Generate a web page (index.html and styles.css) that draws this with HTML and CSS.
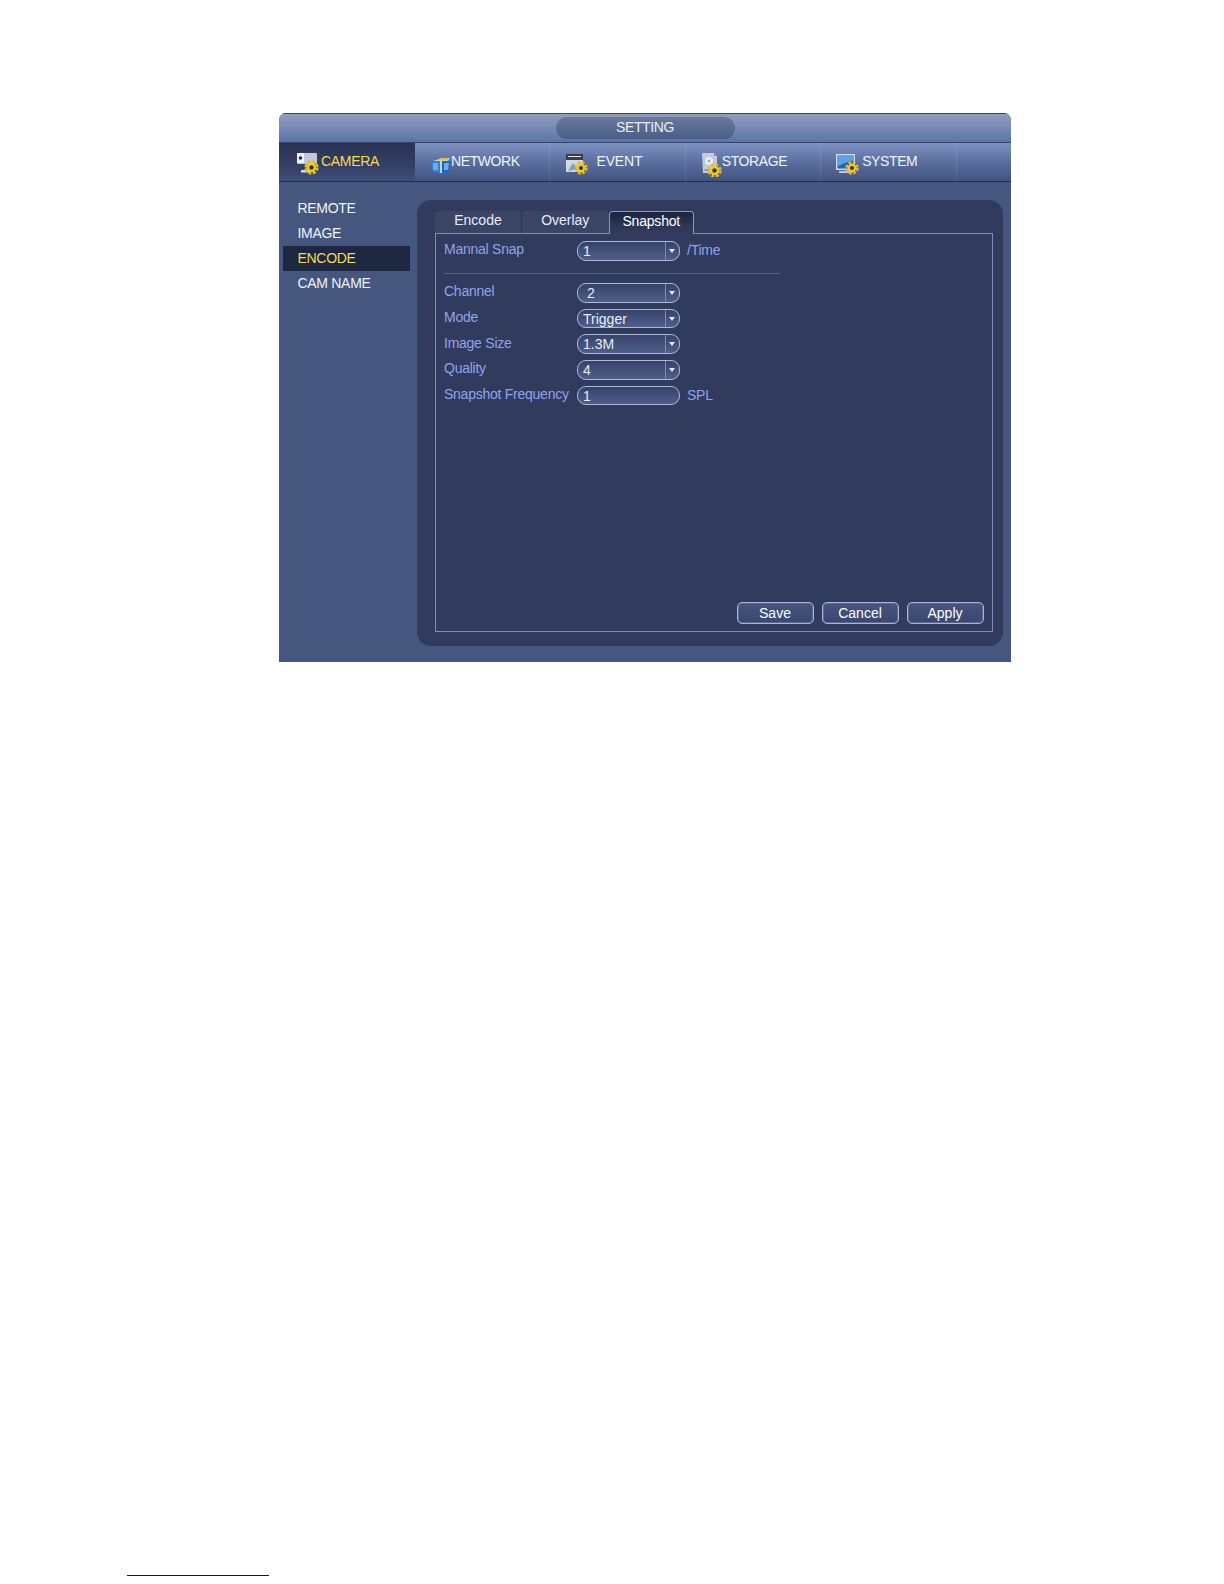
FILE: index.html
```html
<!DOCTYPE html>
<html lang="en">
  <head>
    <meta charset="UTF-8" />
    <title>Setting - Camera - Snapshot</title>
    <link rel="stylesheet" href="styles.css">
  </head>
  <body>
    <svg class="defs" width="0" height="0">
      <symbol id="gear" viewBox="0 0 14 14">
        <circle cx="7" cy="7" r="5.2" fill="none" stroke="#e6bc1c" stroke-width="3" stroke-dasharray="2.6 1.5"/>
        <circle cx="7" cy="7" r="4.2" fill="#f0cc30"/>
        <circle cx="7" cy="7" r="2.1" fill="#3a3a2c"/>
      </symbol>
    </svg>

    <div class="window">
      <div class="titlebar">
        <div class="title-pill">SETTING</div>
      </div>

      <div class="nav">
        <div class="nav-item active cam">
          <svg class="icon" width="24" height="24" viewBox="0 0 24 24">
            <rect x="0" y="0" width="20" height="11" rx="1" fill="#c4c8d4"/>
            <rect x="0" y="0" width="7" height="10" rx="1" fill="#f2f3f6"/>
            <circle cx="3.500" cy="5" r="1.800" fill="#20263c"/>
            <rect x="8" y="11" width="4" height="6" fill="#8c92a6"/>
            <rect x="4" y="17" width="9" height="2.500" fill="#d8dae2"/>
            <use href="#gear" x="7" y="7" width="15" height="15"/>
          </svg>
          <span>CAMERA</span>
        </div>
        <div class="nav-item net">
          <svg class="icon" width="20" height="20" viewBox="0 0 20 20">
            <path d="M2 6l9-3h8l-2 3z" fill="#d8cf9c"/>
            <path d="M11 3h6v2h-6z" fill="#e8bc2c"/>
            <path d="M0 6h9v12l-7-1z" fill="#2f7fd8"/>
            <path d="M9 6h2v12H9z" fill="#c4d8f0"/>
            <path d="M11 6h9l-2 11-7 1z" fill="#1f66c4"/>
            <path d="M2 8h5v7H2zM13 8h5l-1 7h-4z" fill="#69aeee"/>
          </svg>
          <span>NETWORK</span>
        </div>
        <div class="nav-item evt">
          <svg class="icon" width="22" height="22" viewBox="0 0 22 22">
            <rect x="0" y="0" width="17" height="18" fill="#d4d8e2"/>
            <rect x="0" y="0" width="17" height="6" fill="#3a3c48"/>
            <path d="M2 2.500h13" stroke="#e4e6ec"/>
            <path d="M2 17l5-8 4 6z" fill="#7f9ccc"/>
            <use href="#gear" x="8" y="7" width="14" height="14"/>
          </svg>
          <span>EVENT</span>
        </div>
        <div class="nav-item sto">
          <svg class="icon" width="20" height="24" viewBox="0 0 20 24">
            <path d="M0 0h12l3 3v17H1z" fill="#c6cbe0"/>
            <path d="M12 0l3 3h-3z" fill="#7f88a8"/>
            <circle cx="7" cy="8" r="4.800" fill="#e6e8f2" stroke="#a4abc6" stroke-width=".6"/>
            <circle cx="7" cy="8" r="1.200" fill="#9aa2c0"/>
            <rect x="2.500" y="16" width="5" height="2" fill="#8f97b5"/>
            <use href="#gear" x="5" y="10" width="15" height="15"/>
          </svg>
          <span>STORAGE</span>
        </div>
        <div class="nav-item sys">
          <svg class="icon" width="24" height="23" viewBox="0 0 24 23">
            <rect x="0" y="0" width="19" height="16" fill="#d4dae8"/>
            <rect x="1.500" y="1.500" width="16" height="13" fill="#1f63c0"/>
            <path d="M1.500 1.500h16v5c-5 1-11 3-16 6z" fill="#5ea0e8"/>
            <path d="M3 17h13v2H3z" fill="#c4c8d6"/>
            <use href="#gear" x="9" y="7" width="14" height="14"/>
          </svg>
          <span>SYSTEM</span>
        </div>
        <div class="nav-rest"></div>
      </div>

      <div class="content">
        <div class="side">
          <div class="side-item">REMOTE</div>
          <div class="side-item">IMAGE</div>
          <div class="side-item selected">ENCODE</div>
          <div class="side-item">CAM NAME</div>
        </div>

        <div class="panel">
          <div class="tabs">
            <div class="tab first">Encode</div>
            <div class="tab second">Overlay</div>
            <div class="tab current">Snapshot</div>
          </div>

          <div class="box">
            <div class="form-row">
              <label>Mannal Snap</label>
              <div class="combo"><span>1</span><i class="arrow"></i></div>
              <span class="suffix">/Time</span>
            </div>

            <div class="divider"></div>

            <div class="form-group">
              <div class="form-row">
                <label>Channel</label>
                <div class="combo indent"><span>2</span><i class="arrow"></i></div>
              </div>
              <div class="form-row">
                <label>Mode</label>
                <div class="combo"><span>Trigger</span><i class="arrow"></i></div>
              </div>
              <div class="form-row">
                <label>Image Size</label>
                <div class="combo"><span>1.3M</span><i class="arrow"></i></div>
              </div>
              <div class="form-row">
                <label>Quality</label>
                <div class="combo"><span>4</span><i class="arrow"></i></div>
              </div>
              <div class="form-row">
                <label>Snapshot Frequency</label>
                <div class="combo plain"><span>1</span></div>
                <span class="suffix">SPL</span>
              </div>
            </div>

            <div class="buttons">
              <button class="btn">Save</button>
              <button class="btn">Cancel</button>
              <button class="btn">Apply</button>
            </div>
          </div>
        </div>
      </div>
    </div>

    <div class="footnote-line"></div>
  </body>
</html>
```

FILE: styles.css
```css
body {
  margin: 0;
  background: #fff;
  font-family: "Liberation Sans", Arial, sans-serif;
  font-size: 14px;
}

.defs {
  display: block;
  height: 0;
}

.window {
  width: 732px;
  height: 549px;
  margin: 113px 0 0 279px;
  display: flex;
  flex-direction: column;
  background: #45577f;
  border-radius: 7px 7px 0 0;
  overflow: hidden;
}

.titlebar {
  height: 28px;
  display: flex;
  justify-content: center;
  align-items: center;
  border-top: 1px solid #35456c;
  background: linear-gradient(to bottom, #8f9dc0, #7a8cb4 45%, #5a74a8);
}

.title-pill {
  width: 179px;
  height: 22px;
  line-height: 21px;
  text-align: center;
  color: #e8ecf6;
  letter-spacing: -.4px;
  border-radius: 11px;
  background: linear-gradient(to bottom, #6a7a9c, #4a5d88);
}

.nav {
  height: 38px;
  display: flex;
  border-top: 1px solid #34446a;
  border-bottom: 1px solid #232d4d;
  background: linear-gradient(to bottom, #7d92c1, #5a6f9f 50%, #42537f);
  color: #eef2fa;
  letter-spacing: -.4px;
}

.nav-item {
  width: 135.4px;
  display: flex;
  align-items: center;
  flex-shrink: 0;
  border-right: 1px solid rgba(255, 255, 255, .09);
  box-sizing: border-box;
}

.nav-rest {
  flex: 1;
}

.nav-item .icon {
  position: relative;
  top: 3px;
}

.nav-item span {
  position: relative;
  top: -1px;
}

.nav-item.active {
  width: 136px;
  color: #f5dc50;
  letter-spacing: -.3px;
  border-right: none;
  background: linear-gradient(to bottom, #2a3354, #333f65 60%, #3f4e78);
}

.cam { padding-left: 18px; }
.net { padding-left: 16px; }
.evt { padding-left: 16px; letter-spacing: -.1px; }
.evt .icon { margin-right: 8px; }
.sto { padding-left: 16px; }
.sys { padding-left: 15px; }
.sys .icon { margin-right: 2px; }

.content {
  flex: 1;
  display: flex;
  min-height: 0;
}

.side {
  width: 138px;
  padding-top: 13.500px;
  box-sizing: border-box;
  color: #eef2fa;
  letter-spacing: -.3px;
}

.side-item {
  height: 25.3px;
  line-height: 25.3px;
  margin: 0 7px 0 4px;
  padding-left: 14.5px;
}

.side-item.selected {
  color: #f5dc50;
  background: #1e2740;
}

.panel {
  width: 586px;
  height: 446px;
  margin-top: 18px;
  padding: 11px 10px 0 18px;
  box-sizing: border-box;
  border-radius: 14px;
  background: #313b5d;
  display: flex;
  flex-direction: column;
}

.tabs {
  display: flex;
  height: 22px;
  position: relative;
  z-index: 1;
  color: #e8ecf6;
}

.tab {
  height: 22px;
  line-height: 19px;
  text-align: center;
  border-radius: 4px 4px 0 0;
  box-sizing: border-box;
}

.tab.first {
  width: 87px;
  background: #3a4566;
  border-right: 1px solid #2c3552;
}

.tab.second {
  width: 86.500px;
  background: #3a4566;
}

.tab.current {
  width: 85.500px;
  height: 23px;
  color: #fff;
  letter-spacing: -.2px;
  border: 1px solid #8d97b8;
  border-bottom: none;
  background: linear-gradient(to bottom, #1a2340, #2c3655 60%, #313b5d);
}

.box {
  height: 399px;
  display: flex;
  flex-direction: column;
  box-sizing: border-box;
  padding: 7px 8px 7px 8px;
  border: 1px solid #7f8aae;
  color: #8fa3ea;
  letter-spacing: -.25px;
}

.form-row {
  display: flex;
  align-items: center;
  height: 19.600px;
}

.form-row label {
  width: 133px;
  flex-shrink: 0;
  position: relative;
  top: -1.500px;
}

.combo {
  width: 103px;
  height: 19.600px;
  display: flex;
  box-sizing: border-box;
  border: 1px solid #aeb9d8;
  border-radius: 9px;
  color: #e8ecf6;
  letter-spacing: 0;
  line-height: 18px;
  overflow: hidden;
  background: linear-gradient(to bottom, #36426a, #4f5e8a);
}

.combo span {
  flex: 1;
  padding-left: 5px;
}

.combo.indent span {
  padding-left: 9px;
}

.arrow {
  width: 13px;
  border-left: 1px solid #7f8cb0;
  position: relative;
}

.arrow::after {
  content: "";
  position: absolute;
  left: 3px;
  top: 7px;
  border: 3px solid transparent;
  border-top: 4px solid #e8ecf6;
  border-bottom: none;
}

.suffix {
  margin-left: 7px;
  position: relative;
  top: -1px;
}

.divider {
  height: 1px;
  width: 336px;
  margin: 12.500px 0 9px;
  background: #56628c;
}

.form-group {
  display: flex;
  flex-direction: column;
  gap: 6.100px;
}

.buttons {
  margin-top: auto;
  display: flex;
  justify-content: flex-end;
  gap: 8px;
}

.btn {
  width: 77px;
  height: 22px;
  padding: 0 1px 1px 0;
  font-family: inherit;
  font-size: 14px;
  color: #fff;
  letter-spacing: 0;
  border: 1px solid #a8b4d8;
  border-radius: 5px;
  box-shadow: inset 0 0 0 1px #5c6a94;
  background: linear-gradient(to bottom, #46547e, #3a4670);
}

.footnote-line {
  width: 142px;
  height: 1px;
  margin: 913px 0 0 127px;
  background: #00108c;
}
```
